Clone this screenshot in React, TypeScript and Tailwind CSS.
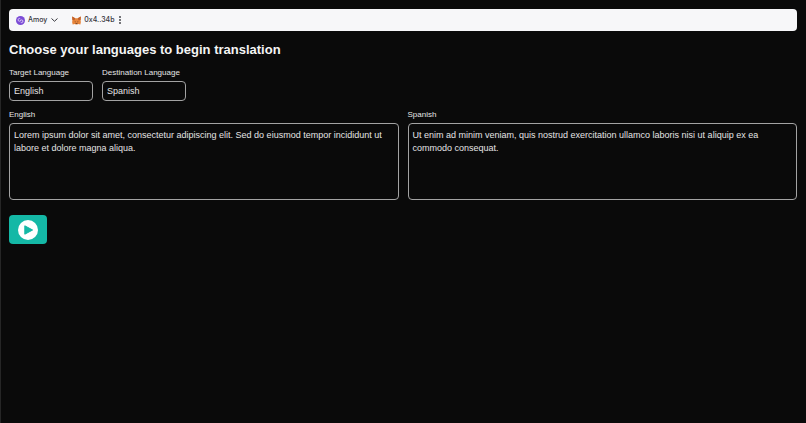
import { useState } from "react";

const LANGUAGES = ["English", "Spanish"];

function PolygonMark() {
  return (
    <svg viewBox="0 0 18 18" className="size-[9px] shrink-0" aria-hidden="true">
      <circle cx="9" cy="9" r="9" fill="#7b4bd6" />
      <g fill="none" stroke="#fff" strokeWidth="1.3" strokeLinejoin="round">
        <path d="M8.900 6.200 6.600 4.900 4.200 6.300v2.800l2.400 1.400 4.800-2.800 2.400 1.400v2.800l-2.400 1.400-2.300-1.300" />
      </g>
    </svg>
  );
}

function FoxMark() {
  return (
    <svg viewBox="0 0 18 18" className="size-[9px] shrink-0" aria-hidden="true">
      <path d="M0.300 1 6.500 4.500h5L17.700 1l-.5 7 .5 4.500-1 4.500-4.500-1.200L10.500 17h-3l-1.700-1.200L1.300 17l-1-4.500L.8 8z" fill="#e8853a" />
      <path d="M.3 1 6.500 4.500 5 8.500.8 8zM17.700 1l-6.200 3.500L13 8.500l4.200-.5z" fill="#c0602a" />
      <path d="M5 10.500l2.500.8L6.800 13zM13 10.500l-2.500.8.7 1.700z" fill="#5a3a28" />
      <path d="M7.300 14.500h3.400l.3 1.700H7z" fill="#5a3a28" />
    </svg>
  );
}

function WalletBar() {
  return (
    <header className="flex h-[22px] items-center rounded bg-[#f7f7f9] px-[7px] font-['Inter',sans-serif] text-[7px] font-medium text-[#36363c]">
      <button type="button" className="flex items-center gap-[3px]">
        <PolygonMark />
        <span>Amoy</span>
        <svg viewBox="0 0 14 8" className="ml-px h-1 w-[7px]" fill="none" stroke="currentColor" strokeWidth="2" aria-hidden="true">
          <path d="m1 1 6 5.500L13 1" />
        </svg>
      </button>
      <button type="button" className="ml-[14px] flex items-center gap-[3px]">
        <FoxMark />
        <span>0x4..34b</span>
        <svg viewBox="0 0 4 16" className="ml-0.5 h-2 w-0.5" fill="currentColor" aria-hidden="true">
          <circle cx="2" cy="2" r="1.800" />
          <circle cx="2" cy="8" r="1.800" />
          <circle cx="2" cy="14" r="1.800" />
        </svg>
      </button>
    </header>
  );
}

type SelectProps = { id: string; label: string; value: string; onChange: (value: string) => void };

function LanguageSelect({ id, label, value, onChange }: SelectProps) {
  return (
    <div className="flex w-[84px] flex-col gap-0.5">
      <label htmlFor={id} className="text-[8px] leading-3 whitespace-nowrap">{label}</label>
      <select
        id={id}
        value={value}
        onChange={(e) => onChange(e.target.value)}
        className="h-5 appearance-none rounded border border-[#a3a3a3] bg-transparent px-1 text-[9px] leading-3"
      >
        {LANGUAGES.map((name) => (
          <option key={name} className="bg-[#0a0a0a]">{name}</option>
        ))}
      </select>
    </div>
  );
}

type AreaProps = { id: string; label: string; text: string };

function TextPanel({ id, label, text }: AreaProps) {
  return (
    <div className="flex min-w-0 flex-1 flex-col gap-0.5">
      <label htmlFor={id} className="text-[8px] leading-3">{label}</label>
      <textarea
        id={id}
        defaultValue={text}
        className="h-[77px] resize-none rounded border border-[#a3a3a3] bg-transparent px-1 py-[5px] text-[9px] leading-[13px]"
      />
    </div>
  );
}

export default function App() {
  const [source, setSource] = useState("English");
  const [destination, setDestination] = useState("Spanish");

  return (
    <div className="min-h-screen border-l border-[#262626] bg-[#0a0a0a] py-[9px] pr-[9px] pl-2 font-['Liberation_Sans',Arial,sans-serif] text-[#e5e5e5]">
      <WalletBar />
      <main className="mt-[10px] flex flex-col gap-2">
        <h1 className="text-[13px] leading-[18px] font-bold text-[#f5f5f5]">Choose your languages to begin translation</h1>
        <div className="flex gap-[9px]">
          <LanguageSelect id="target-language" label="Target Language" value={source} onChange={setSource} />
          <LanguageSelect id="destination-language" label="Destination Language" value={destination} onChange={setDestination} />
        </div>
        <div className="flex gap-[9px]">
          <TextPanel
            id="source-text"
            label={source}
            text="Lorem ipsum dolor sit amet, consectetur adipiscing elit. Sed do eiusmod tempor incididunt ut labore et dolore magna aliqua."
          />
          <TextPanel
            id="translated-text"
            label={destination}
            text="Ut enim ad minim veniam, quis nostrud exercitation ullamco laboris nisi ut aliquip ex ea commodo consequat."
          />
        </div>
        <button type="button" aria-label="Translate" className="mt-[7px] flex h-[29px] w-[38px] items-center justify-center rounded-sm bg-[#14b8a6]">
          <svg viewBox="0 0 20 20" className="size-5" aria-hidden="true">
            <circle cx="10" cy="10" r="10" fill="#fff" />
            <path d="M6.800 5.800v8.400L14.600 10z" fill="#14b8a6" stroke="#14b8a6" strokeWidth="1" strokeLinejoin="round" />
          </svg>
        </button>
      </main>
    </div>
  );
}
